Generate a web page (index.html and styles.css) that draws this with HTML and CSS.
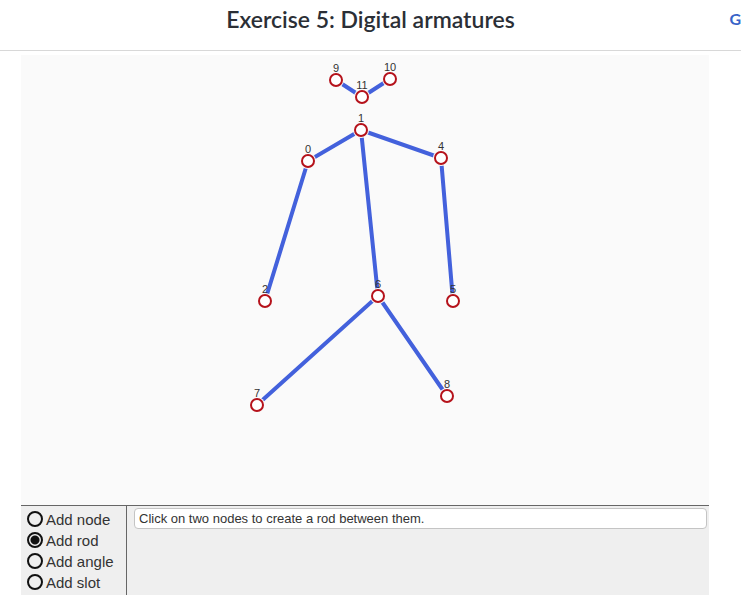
FILE: index.html
```html
<!DOCTYPE html>
<html lang="en">
<head>
<meta charset="utf-8">
<title>Exercise 5: Digital armatures</title>
<link rel="stylesheet" href="styles.css">
</head>
<body>
<header class="header">
  <h1 class="title">Exercise 5: Digital armatures</h1>
  <a class="header-link" href="#">G</a>
</header>
<main class="editor">
  <svg class="canvas" viewBox="21 55 688 450" role="img" aria-label="Armature">
    <g class="rods">
      <path d="M336 80L362 97L390 79"/>
      <path d="M265 301L308 161L361 130L441 158L453 301"/>
      <path d="M361 130L378 296L257 405M378 296L447 396"/>
    </g>
    <g class="halos">
      <circle cx="308" cy="161" r="8"/>
      <circle cx="361" cy="130" r="8"/>
      <circle cx="265" cy="301" r="8"/>
      <circle cx="441" cy="158" r="8"/>
      <circle cx="453" cy="301" r="8"/>
      <circle cx="378" cy="296" r="8"/>
      <circle cx="257" cy="405" r="8"/>
      <circle cx="447" cy="396" r="8"/>
      <circle cx="336" cy="80" r="8"/>
      <circle cx="390" cy="79" r="8"/>
      <circle cx="362" cy="97" r="8"/>
    </g>
    <g class="nodes">
      <circle cx="308" cy="161" r="6"/>
      <circle cx="361" cy="130" r="6"/>
      <circle cx="265" cy="301" r="6"/>
      <circle cx="441" cy="158" r="6"/>
      <circle cx="453" cy="301" r="6"/>
      <circle cx="378" cy="296" r="6"/>
      <circle cx="257" cy="405" r="6"/>
      <circle cx="447" cy="396" r="6"/>
      <circle cx="336" cy="80" r="6"/>
      <circle cx="390" cy="79" r="6"/>
      <circle cx="362" cy="97" r="6"/>
    </g>
    <g class="labels">
      <text x="308" y="153">0</text>
      <text x="361" y="122">1</text>
      <text x="265" y="293">2</text>
      <text x="441" y="150">4</text>
      <text x="453" y="293">5</text>
      <text x="378" y="288">6</text>
      <text x="257" y="397">7</text>
      <text x="447" y="388">8</text>
      <text x="336" y="72">9</text>
      <text x="390" y="71">10</text>
      <text x="362" y="89">11</text>
    </g>
  </svg>
  <div class="panel">
    <div class="tools" role="radiogroup" aria-label="Tool">
      <label class="tool"><input class="radio" type="radio" name="tool">Add node</label>
      <label class="tool"><input class="radio" type="radio" name="tool" checked>Add rod</label>
      <label class="tool"><input class="radio" type="radio" name="tool">Add angle</label>
      <label class="tool"><input class="radio" type="radio" name="tool">Add slot</label>
    </div>
    <div class="details">
      <input class="hint" type="text" readonly aria-label="Hint" value="Click on two nodes to create a rod between them.">
    </div>
  </div>
</main>
</body>
</html>
```
FILE: styles.css
```css
* {
  box-sizing: border-box;
}

body {
  margin: 0;
  background: #fff;
  color: #333;
  font-family: "Liberation Sans", Arial, sans-serif;
}

.header {
  display: grid;
  grid-template-columns: 1fr auto 1fr;
  border-bottom: 1px solid #d8d8d8;
  font-family: Lato, sans-serif;
  line-height: 30px;
  padding: 4px 0 16px;
}

.title {
  grid-column: 2;
  margin: 0;
  color: #2b2f36;
  font-size: 23px;
  font-weight: 600;
}

.header-link {
  justify-self: end;
  color: #3763c8;
  font-size: 16px;
  font-weight: 700;
  text-decoration: none;
}

.editor {
  margin: 4px 32px 20px 21px;
}

.canvas {
  display: block;
  width: 100%;
  background: #fafafa;
}

.rods {
  fill: none;
  stroke: #4361dc;
  stroke-width: 4;
}

.halos {
  fill: #fafafa;
}

.nodes {
  fill: #fff;
  stroke: #b5121b;
  stroke-width: 2;
}

.labels {
  fill: #333;
  font-size: 11px;
  text-anchor: middle;
}

.panel {
  display: flex;
  background: #efefef;
  border-top: 1px solid #666;
}

.tools {
  width: 106px;
  padding: 3px 0 2px 6px;
  border-right: 1px solid #666;
}

.tool {
  display: flex;
  align-items: flex-start;
  gap: 3px;
  font-size: 15px;
  line-height: 21px;
}

.radio {
  appearance: none;
  width: 16px;
  height: 16px;
  margin: 2px 0 0;
  border: 2px solid #111;
  border-radius: 50%;
}

.radio:checked {
  background: radial-gradient(circle, #111 4px, transparent 5px);
}

.details {
  flex: 1;
  padding: 2px 2px 0 7px;
}

.hint {
  display: block;
  width: 100%;
  height: 21px;
  padding: 0 4px;
  border: 1px solid #c4c4c4;
  border-radius: 4px;
  background: #fff;
  color: #333;
  font: 13px "Liberation Sans", Arial, sans-serif;
}
```
